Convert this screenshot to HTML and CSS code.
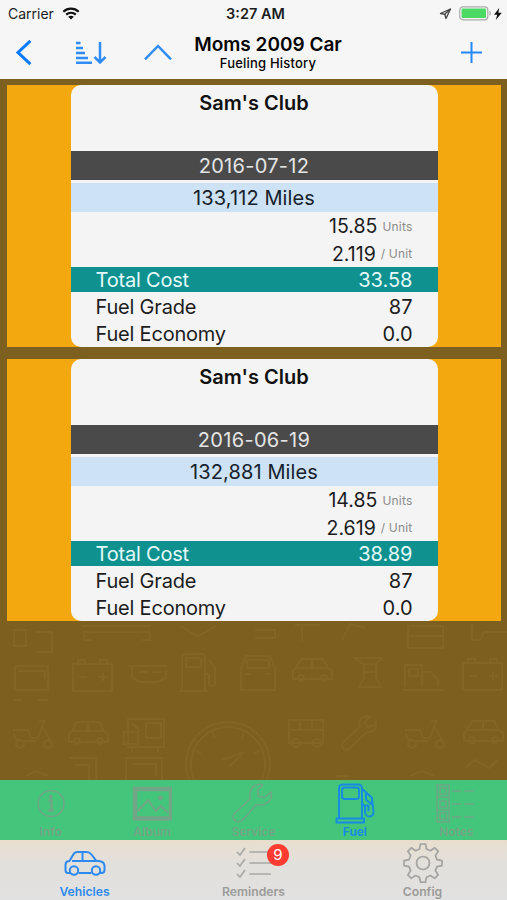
FILE: index.html
```
<!DOCTYPE html>
<html lang="en">
<head>
  <meta charset="UTF-8" />
  <meta name="viewport" content="width=device-width, initial-scale=1.0"/>
  <title>Fueling History</title>
  <link rel="stylesheet" href="styles.css">
</head>
<body>
  <div class="app">
    <div class="status">
      <div class="carrier">
        <span>Carrier</span>
        <svg width="18" height="13" viewBox="0 0 18 13" fill="none" stroke="#111" stroke-width="2.2">
          <path d="M1.3 4.8C5.6.6 12.4.6 16.7 4.8M4.2 7.6c2.7-2.5 6.9-2.5 9.6 0"/>
          <path d="M9 12.5 6.2 9.8c1.6-1.4 4-1.4 5.6 0z" fill="#111" stroke="none"/>
        </svg>
      </div>
      <div class="time">3:27 AM</div>
      <div class="power">
        <svg width="13" height="12" viewBox="0 0 13 12" fill="none" stroke="#444" stroke-width="1.3" stroke-linejoin="round"><path d="M11.5 1 1.5 5.5l4.2.8 1.3 4.2z"/><path d="M11.5 1 5.7 6.3"/></svg>
        <svg width="33" height="15" viewBox="0 0 33 15"><rect x=".8" y=".8" width="28" height="13" rx="3" fill="none" stroke="#aaa" stroke-width="1.2"/><rect x="2.6" y="2.6" width="24.4" height="9.4" rx="1" fill="#4cd964"/><path d="M30.4 5v4.6c2-.7 2-3.9 0-4.6z" fill="#aaa"/></svg>
        <svg width="8" height="12" viewBox="0 0 8 12" fill="#111"><path d="M5.2 0 0 6.8h3.2L1.8 12 7.8 4.8H4.4z"/></svg>
      </div>
    </div>
    <div class="navbar">
      <div class="nav-left">
        <svg width="18" height="27" viewBox="0 0 18 27" fill="none" stroke="#087aff" stroke-width="3"><path d="M15.4 1.8 3 13.5l12.4 11.7"/></svg>
        <svg width="32" height="25" viewBox="0 0 32 25" fill="none" stroke="#2f8cf5" stroke-width="2.5"><path d="M1 3h4.5M1 8h7M1 13h9M1 18h12M1 22.8h16"/><path d="M25 2v20M19.5 17l5.500 5.500 5.500-5.500"/></svg>
        <svg width="28" height="17" viewBox="0 0 28 17" fill="none" stroke="#2f8cf5" stroke-width="2.5"><path d="M1 15.400 14 2l13 13.400"/></svg>
      </div>
      <div class="title">
        <h1>Moms 2009 Car</h1>
        <h2>Fueling History</h2>
      </div>
      <svg class="add" width="21" height="21" viewBox="0 0 21 21" stroke="#2388ff" stroke-width="2"><path d="M10.5 0v21M0 10.5h21"/></svg>
    </div>

    <div class="history">
      <div class="entry">
        <div class="card">
          <div class="station">Sam's Club</div>
          <div class="date">2016-07-12</div>
          <div class="miles">133,112 Miles</div>
          <div class="units"><span>15.85</span> <small>Units</small></div>
          <div class="units"><span>2.119</span> <small>/ Unit</small></div>
          <div class="total"><span>Total Cost</span><b>33.58</b></div>
          <div class="line"><span>Fuel Grade</span><b>87</b></div>
          <div class="line"><span>Fuel Economy</span><b>0.0</b></div>
        </div>
      </div>
      <div class="entry">
        <div class="card">
          <div class="station">Sam's Club</div>
          <div class="date">2016-06-19</div>
          <div class="miles">132,881 Miles</div>
          <div class="units"><span>14.85</span> <small>Units</small></div>
          <div class="units"><span>2.619</span> <small>/ Unit</small></div>
          <div class="total"><span>Total Cost</span><b>38.89</b></div>
          <div class="line"><span>Fuel Grade</span><b>87</b></div>
          <div class="line"><span>Fuel Economy</span><b>0.0</b></div>
        </div>
      </div>
    </div>

    <div class="pattern">
      <svg width="507" height="159" viewBox="0 621 507 159" fill="none" stroke="#836625" stroke-width="2">
        <defs>
          <g id="scooter"><path d="M0 9h15l3 8h7l6-17h-5M29 5l9 16M1 12c0 5 2 8 8 8h14"/><circle cx="7" cy="23" r="4"/><circle cx="35" cy="23" r="4"/></g>
          <g id="sedan"><path d="M4 11 9 2h22l5 9 4 3v8H1v-8zM5 11h31M20 2v9"/><circle cx="9" cy="21" r="3"/><circle cx="32" cy="21" r="3"/></g>
          <g id="battery"><path d="M0 5h39v27H0zM5 5V1h7v4M27 5V1h7v4M6 18h8M26 18h8M30 14v8"/></g>
          <g id="pump"><path d="M3 38V4q0-3 3-3h17q3 0 3 3v34M0 38h29M7 5h15v9H7zM26 21h4v10q3 5 6 0V15l-6-8"/></g>
          <g id="truck"><path d="M3 24V2h17v22M20 9h9l7 8v7M0 27h42M7 6h9v7H7z"/></g>
          <g id="wrench"><path d="M2 28 20 12q-3-8 6-11l4 1-5 5 2 5 6-1 3-4q1 11-9 10L9 34q-7 3-7-6z"/></g>
          <g id="bus"><path d="M2 2h34v23H2zM2 12h34M13 2v10M25 2v10"/><circle cx="9" cy="25" r="4"/><circle cx="30" cy="25" r="4"/></g>
        </defs>
        <path d="M14 630h12v16H14zM36 632h16v20H36M82 626h69M82 632h69M84 634v6h8M142 640h8v-8M180 626l18 10 18-10M255 630h20v8h-20M295 625h25M302 625v16M342 640l8-16 16 4"/>
        <path d="M408 626h35v22h-35zM408 636h35M472 624v16h8l4-8h23"/>
        <path d="M15 666h33v24H15zM18 671h27v8M14 700h8M38 700h10"/>
        <use href="#battery" x="73" y="659"/>
        <path d="M128 666h39M132 666v12l8 4h18l8-4v-8M139 672h8M153 672h8"/>
        <use href="#pump" x="179" y="653"/>
        <path d="M241 690V668l5-12h24l5 12v22zM247 660h22v8h-22zM245 674h6M265 674h6"/>
        <use href="#sedan" x="292" y="657"/>
        <path d="M355 658h27l-6 6h-14zM364 664v14l-5 9h22l-5-9v-14M364 672h12"/>
        <use href="#truck" x="402" y="663"/>
        <use href="#battery" x="463" y="658"/>
        <use href="#scooter" x="13" y="721"/>
        <use href="#sedan" x="68" y="720"/>
        <path d="M128 719h36v28h-36zM146 723h15v15h-15zM124 732h14v12h-14zM132 723l8 8M132 748v4M158 748v4"/>
        <circle cx="228" cy="764" r="42"/>
        <circle cx="228" cy="764" r="37"/>
        <path d="M222 760l22-8-15 15M196 750l5 4M212 732l3 6M244 733l-3 6M260 750l-6 4"/>
        <use href="#bus" x="287" y="718"/>
        <use href="#wrench" x="340" y="715"/>
        <use href="#scooter" x="405" y="721"/>
        <use href="#sedan" x="463" y="719"/>
        <path d="M26 776l10-5 12 5M70 758h26v22M75 765h14v15M126 780v-22h36v22M132 764h24v12M336 776h14M410 776l12-5 12 5M465 768l10-8 14 8 8-8"/>
      </svg>
    </div>

    <div class="tabs">
      <div class="tab">
        <svg width="40" height="42" viewBox="0 0 40 42" fill="none" stroke="#72a586" stroke-width="1.5"><circle cx="20" cy="21.5" r="13"/><path d="M17.5 18.5h3v10M17 28.5h6" stroke-width="2.5"/><circle cx="19.7" cy="14.7" r="2" fill="#72a586" stroke="none"/></svg>
        <span>Info</span>
      </div>
      <div class="tab">
        <svg width="40" height="42" viewBox="0 0 40 42" fill="none" stroke="#72a586"><rect x="3" y="7" width="36" height="29.5" stroke-width="4.5"/><path d="M6 29l10-11 8 11 5-5 7 7" stroke-width="2"/><circle cx="28.5" cy="16" r="2.5" fill="#72a586" stroke="none"/></svg>
        <span>Album</span>
      </div>
      <div class="tab">
        <svg width="42" height="42" viewBox="0 0 42 42" fill="none" stroke="#72a586" stroke-width="1.6" stroke-linejoin="round"><path d="M2.5 31.5 18.5 16.5C16 7 22 1 31 2.500l-5.500 6 1 6 6 1 6.500-5.500C41 18 34 25 24.500 22.500L11 37.500C6 43-2 37 2.500 31.500z"/></svg>
        <span>Service</span>
      </div>
      <div class="tab active">
        <svg width="40" height="42" viewBox="0 0 40 42" fill="none" stroke="#1689e5" stroke-width="1.9" stroke-linejoin="round"><path d="M4 36.500V6.500Q4 2.500 8 2.500h15q4 0 4 4v30M1.500 36.500h27.500v4H1.500z"/><rect x="7" y="5.500" width="17" height="11.500" rx="2.500"/><path d="M28 7.500l9 8.500 1.500 14q0 4.500-4 4.500t-4.500-4.500v-6l-2.500-2M31 11v6.500l6 5V16M30.500 23.500h3v6"/></svg>
        <span>Fuel</span>
      </div>
      <div class="tab">
        <svg width="42" height="42" viewBox="0 0 42 42" fill="none" stroke="#72a586" stroke-width="1.5"><path d="M2 3h12v37H2zM2 15h12M2 28h12M5 6h6v6H5zM5 19h6v6H5zM5 31h6v6H5zM17 9h9M29 9h10M17 22h9M29 22h10M17 35h9M29 35h10"/></svg>
        <span>Notes</span>
      </div>
    </div>

    <div class="tabbar">
      <div class="item active">
        <svg width="42" height="42" viewBox="0 0 42 42" fill="none" stroke="#2c89f0" stroke-width="2"><path d="M6 31H4q-2.500 0-2.500-3v-5q0-4 4-4l3.500-6q1.500-3 4.500-3h9q3 0 5 2.500l4.500 6 5 1q3.500 1 3.500 5v3.500q0 3-3 3h-2M14.500 31h13M8 19h24.500M18.500 10v9"/><circle cx="10" cy="28.500" r="4.200"/><circle cx="32" cy="28.500" r="4.200"/></svg>
        <span>Vehicles</span>
      </div>
      <div class="item">
        <svg width="42" height="42" viewBox="0 0 42 42" fill="none" stroke="#a8a8a5" stroke-width="1.7"><path d="M4 10l3 3 5-7M4 21l3 3 5-7M4 32l3 3 5-7M16.500 10H38M16.500 21H38M16.500 32H38"/></svg>
        <b class="badge">9</b>
        <span>Reminders</span>
      </div>
      <div class="item">
        <svg width="42" height="42" viewBox="0 0 42 42" fill="none" stroke="#a3a3a1" stroke-width="1.7" stroke-linejoin="round"><path d="M18.500 2h5l1 5 4 1.700 4.300-2.900 3.500 3.500-2.900 4.200L35 17.600l5 1v5l-5 1-1.700 4 2.900 4.300-3.500 3.500-4.200-2.900-4 1.700-1 5h-5l-1-5-4-1.700-4.200 2.900-3.500-3.500 2.900-4.300-1.700-4-5-1v-5l5-1 1.700-4.100-2.900-4.200 3.500-3.500 4.200 2.900 4-1.700z"/><circle cx="21" cy="21" r="6.500"/></svg>
        <span>Config</span>
      </div>
    </div>
  </div>
</body>
</html>
```
FILE: styles.css
```
* {
  box-sizing: border-box;
}
body {
  margin: 0;
  font-family: 'Inter', 'Liberation Sans', sans-serif;
  background-color: #7d5f20;
  color: #1c1c1e;
}
svg {
  display: block;
  flex: none;
}
.app {
  width: 507px;
  height: 900px;
  display: flex;
  flex-direction: column;
  overflow: hidden;
}
.status {
  height: 27px;
  display: grid;
  grid-template-columns: 1fr auto 1fr;
  align-items: center;
  padding: 0 5px 0 8px;
  background-color: #f6f6f6;
  font-size: 14px;
}
.carrier, .power {
  display: flex;
  align-items: center;
}
.carrier {
  gap: 8px;
}
.time {
  padding-left: 1px;
  font-weight: 600;
  font-size: 14.5px;
}
.power {
  justify-content: flex-end;
  gap: 5px;
}
.power svg:first-child {
  margin-right: 2px;
}
.power svg:last-child {
  margin-left: -3px;
}
.navbar {
  height: 52px;
  padding-bottom: 2px;
  display: grid;
  grid-template-columns: 175px 186px 1fr;
  align-items: center;
  background-color: #f6f6f6;
}
.nav-left {
  display: flex;
  align-items: center;
  padding-left: 15px;
}
.nav-left svg:nth-child(2) {
  margin-left: 42px;
}
.nav-left svg:nth-child(3) {
  margin-left: 37px;
}
.title {
  padding-top: 1px;
  text-align: center;
  color: #050505;
  white-space: nowrap;
}
.title h1 {
  margin: 0;
  font-size: 19px;
  line-height: 22px;
  font-weight: 600;
}
.title h2 {
  margin: 0;
  font-size: 13px;
  line-height: 15px;
  font-weight: 500;
  letter-spacing: 0.2px;
}
.add {
  justify-self: end;
  margin-right: 25px;
}
.history {
  padding: 6px 6px 0 7px;
  display: flex;
  flex-direction: column;
  gap: 12px;
}
.entry {
  height: 262px;
  padding: 0 63.5px;
  background-color: #f4a80f;
}
.card {
  height: 262px;
  display: grid;
  grid-template-rows: 66px 29px 32px 28px 27px 25px 28px 27px;
  background-color: #f4f4f4;
  border-radius: 10px;
  overflow: hidden;
  font-size: 20px;
}
.station {
  padding-top: 6px;
  line-height: 24px;
  text-align: center;
  color: #111;
  font-weight: 600;
}
.date, .miles {
  text-align: center;
}
.date {
  line-height: 31px;
  background-color: #4a4a4a;
  color: #e4e4e4;
  letter-spacing: 0.3px;
}
.miles {
  margin-top: 3px;
  line-height: 31px;
  background-color: #cde2f5;
  color: #17212b;
  letter-spacing: 0.1px;
}
.units, .line, .total {
  display: flex;
  align-items: center;
  padding: 0 25px;
}
.units {
  justify-content: flex-end;
  gap: 5px;
  font-size: 19.5px;
}
.units small {
  font-size: 12px;
  color: #8b8b8b;
  letter-spacing: 0.2px;
}
.total, .line {
  justify-content: space-between;
}
.total span, .line span {
  letter-spacing: -0.2px;
}
.total b, .line b {
  font-weight: 400;
}
.line:not(:last-child) {
  padding-top: 2px;
}
.line:last-child {
  padding-top: 1px;
}
.total {
  background-color: #0e918f;
  color: #e4fafa;
}
.pattern {
  flex: 1;
}
.tabs {
  height: 60px;
  display: grid;
  grid-template-columns: repeat(5, 1fr);
  background-color: #43c67b;
}
.tab, .item {
  display: flex;
  flex-direction: column;
  align-items: center;
  font-weight: 600;
}
.tab {
  padding-top: 2px;
  font-size: 12px;
  line-height: 15px;
  color: #72a586;
}
.tab.active {
  color: #1689e5;
}
.tabbar {
  height: 60px;
  display: grid;
  grid-template-columns: repeat(3, 1fr);
  background: linear-gradient(#e8decd, #e2e0dc 40%, #e1e1e1);
}
.item {
  position: relative;
  padding-top: 2px;
  font-size: 12.2px;
  line-height: 15px;
  color: #9b9b99;
}
.item.active {
  color: #2c89f0;
}
.badge {
  position: absolute;
  left: 98px;
  top: 4px;
  width: 22px;
  height: 22px;
  border-radius: 50%;
  background-color: #fd3b31;
  color: white;
  font-size: 15px;
  line-height: 22px;
  font-weight: 400;
  text-align: center;
}
```
